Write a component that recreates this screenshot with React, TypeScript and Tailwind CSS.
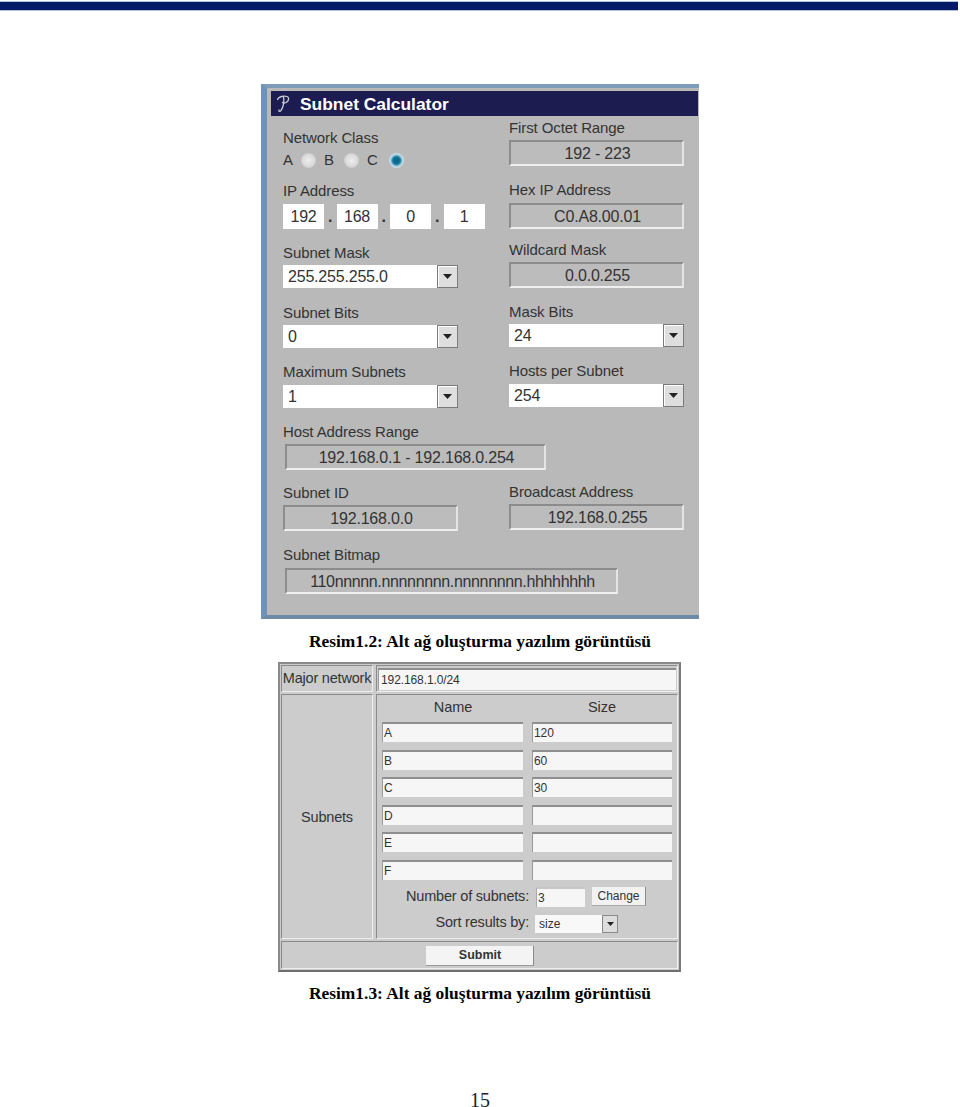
import React from "react";

const sans = { fontFamily: '"Liberation Sans", Arial, sans-serif' };

function Label({ children, className = "" }: { children: React.ReactNode; className?: string }) {
  return <div className={`h-[18px] text-[15px] leading-[18px] text-[#333] tracking-[-0.1px] whitespace-nowrap ${className}`}>{children}</div>;
}

function Readout({ value, className = "" }: { value: string; className?: string }) {
  return (
    <div className={`flex h-[26px] w-[175px] items-center justify-center border-2 border-t-[#8c8c8c] border-l-[#8c8c8c] border-r-[#e4e4e4] border-b-[#efefef] bg-[#bcbcbc] pl-[2px] pt-[1px] text-[16px] tracking-[-0.2px] text-[#333] whitespace-nowrap ${className}`}>
      {value}
    </div>
  );
}

function Combo({ value }: { value: string }) {
  return (
    <div className="flex h-[23px] w-[175px] items-stretch">
      <div className="flex flex-1 items-center bg-white pl-[5px] text-[16px] tracking-[-0.2px] text-[#333]">{value}</div>
      <div className="flex w-[21px] items-center justify-center border border-[#7b7b7b] bg-[#dedede] shadow-[inset_1px_1px_0_#fff]">
        <svg width="9" height="5" viewBox="0 0 9 5"><path d="M0 0h9L4.5 5z" fill="#222" /></svg>
      </div>
    </div>
  );
}

function Radio({ on = false }: { on?: boolean }) {
  return (
    <span className={`inline-block h-[15px] w-[15px] rounded-full ${on ? "bg-[radial-gradient(circle,#0b5f80_0%,#10789c_35%,#a9cfe0_55%,#e2eef4_80%,#c0c8cc_100%)]" : "bg-[radial-gradient(circle,#eeeeee_0%,#dcdcdc_50%,#c6c6c6_85%,#b4b4b4_100%)]"}`} />
  );
}

function Octet({ value }: { value: string }) {
  return <div className="flex h-[25px] w-[41px] items-center justify-center bg-white text-[16px] tracking-[-0.2px] text-[#333]">{value}</div>;
}

function Dot() {
  return <div className="flex h-[25px] w-[12.5px] items-end justify-center pb-[2px] text-[16px] font-bold leading-[20px] text-[#333]">.</div>;
}

function Entry({ value = "", className = "" }: { value?: string; className?: string }) {
  return (
    <div className={`flex h-[20px] items-center border-t-2 border-l border-t-[#8f8f8f] border-l-[#9a9a9a] bg-[#f6f6f6] pl-[1px] text-[12px] tracking-[-0.1px] text-[#333] ${className}`}>
      {value}
    </div>
  );
}

function Cell({ children, className = "" }: { children: React.ReactNode; className?: string }) {
  return <div className={`border border-t-[#8a8a8a] border-l-[#8a8a8a] border-r-[#eeeeee] border-b-[#eeeeee] ${className}`}>{children}</div>;
}

function Caption({ children, className = "" }: { children: React.ReactNode; className?: string }) {
  return (
    <div className={`text-center text-[17.4px] font-bold leading-[20px] text-black ${className}`} style={{ fontFamily: '"Liberation Serif", "Times New Roman", serif' }}>
      {children}
    </div>
  );
}

function SubnetRow({ name, size }: { name: string; size?: string }) {
  return (
    <div className="flex gap-[9px]">
      <Entry value={name} className="w-[141px]" />
      <Entry value={size} className="w-[140px]" />
    </div>
  );
}

export default function App() {
  return (
    <div className="h-[1107px] w-[960px] overflow-hidden bg-white" style={sans}>
      <div className="h-[1px]" />
      <div className="mr-[2px] h-[10px] border-y border-y-[#b4c0dc] bg-[#051b66]" />

      <div className="ml-[261px] mt-[73px] h-[535px] w-[438px] border-t-[4px] border-b-[4px] border-l-[6px] border-t-[#7e9cb8] border-b-[#6f8aa6] border-l-[#6d93bb] bg-[#b9b9b9]">
        <div className="ml-[4px] mr-[1px] mt-[3px] flex h-[25px] items-center bg-[#1c1c50] pl-[6px] text-white">
          <svg className="w-[23px] shrink-0" width="23" height="18" viewBox="0 0 23 18" fill="none" stroke="#c9c9d8" strokeWidth="1.3" strokeLinecap="round">
            <path d="M0.5 4.5C1.5 1.5 7 0.5 10 1.5C12.5 2.5 12 6 9 7.5C7.5 8.2 6 8 5.5 7.5" />
            <path d="M6.5 2C7.5 6 6.5 12 4 15.5C3 16.8 1.5 16.5 2 15" />
          </svg>
          <span className="pt-[2px] text-[17.4px] font-bold leading-none">Subnet Calculator</span>
        </div>

        <div className="flex pl-[16px]">
          <div className="w-[226px]">
            <Label className="mt-[13px]">Network Class</Label>
            <div className="mt-[4px] flex h-[18px] items-center text-[15px] text-[#333]">
              <span className="w-[18px]">A</span><Radio /><span className="ml-[8px] w-[20px]">B</span><Radio /><span className="ml-[8px] w-[22px]">C</span><Radio on />
            </div>
            <Label className="mt-[13px]">IP Address</Label>
            <div className="mt-[4px] flex">
              <Octet value="192" /><Dot /><Octet value="168" /><Dot /><Octet value="0" /><Dot /><Octet value="1" />
            </div>
            <Label className="mt-[15px]">Subnet Mask</Label>
            <div className="mt-[3px]"><Combo value="255.255.255.0" /></div>
            <Label className="mt-[16px]">Subnet Bits</Label>
            <div className="mt-[3px]"><Combo value="0" /></div>
            <Label className="mt-[15px]">Maximum Subnets</Label>
            <div className="mt-[4px]"><Combo value="1" /></div>
          </div>
          <div className="w-[177px]">
            <Label className="mt-[3px]">First Octet Range</Label>
            <Readout value="192 - 223" className="mt-[3px]" />
            <Label className="mt-[15px]">Hex IP Address</Label>
            <Readout value="C0.A8.00.01" className="mt-[4px]" />
            <Label className="mt-[12px]">Wildcard Mask</Label>
            <Readout value="0.0.0.255" className="mt-[3px]" />
            <Label className="mt-[15px]">Mask Bits</Label>
            <div className="mt-[3px]"><Combo value="24" /></div>
            <Label className="mt-[15px]">Hosts per Subnet</Label>
            <div className="mt-[4px]"><Combo value="254" /></div>
          </div>
        </div>

        <div className="pl-[16px]">
          <Label className="mt-[15px]">Host Address Range</Label>
          <Readout value="192.168.0.1 - 192.168.0.254" className="ml-[2px] mt-[3px] w-[261px]" />
        </div>

        <div className="flex pl-[16px]">
          <div className="w-[226px]">
            <Label className="mt-[14px]">Subnet ID</Label>
            <Readout value="192.168.0.0" className="mt-[3px]" />
          </div>
          <div className="w-[177px]">
            <Label className="mt-[13px]">Broadcast Address</Label>
            <Readout value="192.168.0.255" className="mt-[3px]" />
          </div>
        </div>

        <div className="pl-[16px]">
          <Label className="mt-[15px]">Subnet Bitmap</Label>
          <Readout value="110nnnnn.nnnnnnnn.nnnnnnnn.hhhhhhhh" className="ml-[2px] mt-[4px] w-[333px] tracking-[-0.35px]" />
        </div>
      </div>

      <Caption className="mt-[12px]">Resim1.2: Alt ağ oluşturma yazılım görüntüsü</Caption>

      <div className="ml-[278px] mt-[11px] h-[310px] w-[403px] border-2 border-t-[#8a8a8a] border-l-[#8a8a8a] border-r-[#7a7a7a] border-b-[#6f6f6f] bg-[#cccccc] p-[1px] text-[#333]">
        <div className="flex gap-[3px]">
          <Cell className="flex h-[27px] w-[92px] shrink-0 items-center justify-center text-[14.5px] tracking-[-0.2px] whitespace-nowrap">Major network</Cell>
          <Cell className="flex h-[27px] min-w-0 flex-1 items-center pl-[1px] pr-[1px]">
            <Entry value="192.168.1.0/24" className="h-[22px] w-full pl-[2px]" />
          </Cell>
        </div>
        <div className="mt-[2px] flex gap-[3px]">
          <Cell className="flex h-[245px] w-[92px] shrink-0 items-center justify-center text-[14.5px] tracking-[-0.2px]">
            <span className="mt-[3px]">Subnets</span>
          </Cell>
          <Cell className="h-[245px] min-w-0 flex-1 pl-[5px] pt-[2px]">
            <div className="flex h-[22px] items-center text-[14.5px]">
              <span className="w-[142px] text-center">Name</span>
              <span className="ml-[7px] w-[142px] text-center">Size</span>
            </div>
            <div className="mt-[3px] flex flex-col gap-[7.6px]">
              <SubnetRow name="A" size="120" />
              <SubnetRow name="B" size="60" />
              <SubnetRow name="C" size="30" />
              <SubnetRow name="D" />
              <SubnetRow name="E" />
              <SubnetRow name="F" />
            </div>
            <div className="mt-[6px] flex h-[22px] items-center">
              <span className="w-[147px] text-right text-[14.5px] tracking-[-0.2px]">Number of subnets:</span>
              <Entry value="3" className="ml-[7px] w-[49px] border-t-[#c8c8c8] border-l-[#aaa]" />
              <div className="ml-[7px] flex h-[19px] w-[54px] items-center justify-center border-r border-b border-r-[#8a8a8a] border-b-[#aaa] bg-[#f2f2f2] text-[12px]">Change</div>
            </div>
            <div className="mt-[5px] flex h-[20px] items-center">
              <span className="w-[147px] text-right text-[14.5px] tracking-[-0.2px]">Sort results by:</span>
              <div className="ml-[6px] mt-[2px] flex h-[18px] w-[83px] items-stretch bg-[#f8f8f8]">
                <span className="flex flex-1 items-center pl-[4px] text-[12px]">size</span>
                <span className="flex w-[16px] items-center justify-center border border-[#8a8a8a] bg-[#dcdcdc]">
                  <svg width="7" height="4" viewBox="0 0 7 4"><path d="M0 0h7L3.5 4z" fill="#222" /></svg>
                </span>
              </div>
            </div>
          </Cell>
        </div>
        <Cell className="mt-[2px] flex h-[28px] items-center justify-center pt-[1px]">
          <div className="flex h-[20px] w-[108px] items-center justify-center border-r border-b border-r-[#8a8a8a] border-b-[#999] bg-[#f4f4f4] pl-[2px] text-[12.5px] font-bold">Submit</div>
        </Cell>
      </div>

      <Caption className="mt-[11px]">Resim1.3: Alt ağ oluşturma yazılım görüntüsü</Caption>

      <div className="mt-[90px] text-center text-[20px] leading-[14px] text-[#222]" style={{ fontFamily: '"Liberation Serif", serif' }}>15</div>
    </div>
  );
}
